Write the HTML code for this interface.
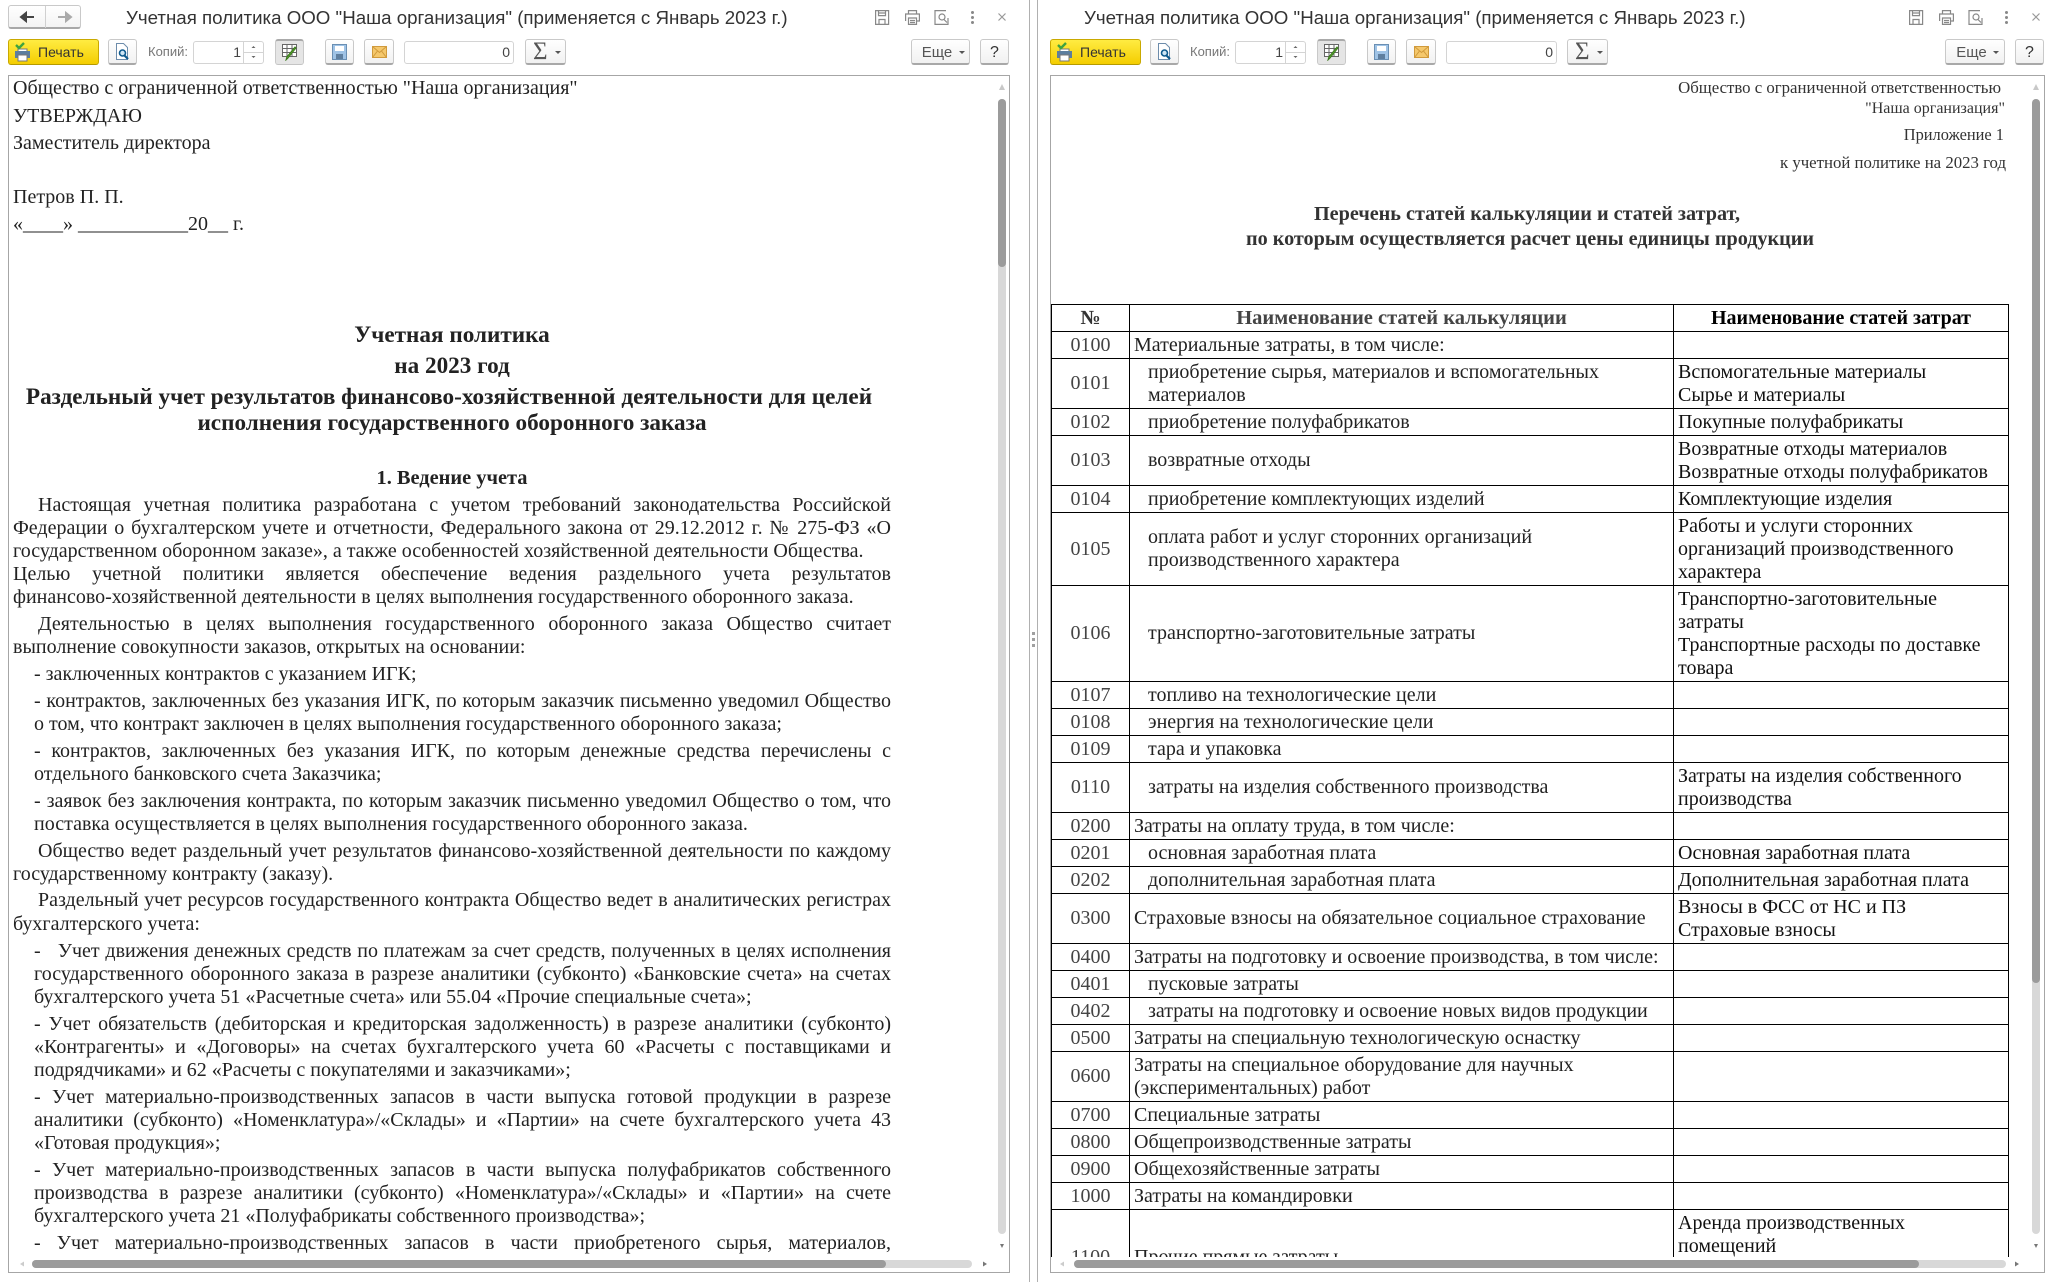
<!DOCTYPE html>
<html lang="ru"><head><meta charset="utf-8"><title>Учетная политика</title>
<style>
html,body{margin:0;padding:0;background:#fff;width:2053px;height:1282px;overflow:hidden}
body{position:relative;font-family:"Liberation Sans",sans-serif;color:#222}
div,span{box-sizing:border-box}
.a{position:absolute}
.t{position:absolute;font-size:18.72px;line-height:24px;white-space:nowrap;color:#333;top:6px}
.btn{position:absolute;top:39px;height:26px;border:1px solid #c9c9c9;border-bottom:2px solid #a8a8a8;border-radius:3px;background:linear-gradient(#fff,#f1f1f1);font-size:14px;color:#444;text-align:center;line-height:25px}
.inp{position:absolute;top:41px;height:23px;border:1px solid #d4d4d4;border-radius:3px;background:#fff;font-size:14px;color:#555;text-align:right;line-height:21px;padding-right:3px}
.frame{position:absolute;top:75px;height:1198px;border:1px solid #a6a6a6;background:#fff}
.tr{position:absolute;background:#d8d8d8;border-radius:4px}
.th{position:absolute;background:#9b9b9b;border-radius:4px}
.doc{font-family:"Liberation Serif",serif;color:#222;font-size:20.2px}
.l{position:absolute;left:13px;width:878px;height:23px;margin-top:1px;line-height:23px;white-space:nowrap;font-family:"Liberation Serif",serif;font-size:20px;color:#222}
.i{left:38px;width:853px}.li{left:34px;width:857px}
.j{white-space:normal;text-align:justify;text-align-last:justify;overflow:hidden}
.c{left:13px;width:878px;text-align:center;font-weight:bold;font-size:20.4px}
.b21{font-size:23.2px;color:#222;height:28px;line-height:23px}
.r{position:absolute;font-family:"Liberation Serif",serif;font-size:16.8px;line-height:20px;margin-top:1px;white-space:nowrap;color:#333;text-align:right;right:48px}
table{border-collapse:collapse;table-layout:fixed;width:957px;position:absolute;left:0;top:0;font-family:"Liberation Serif",serif;font-size:20px;line-height:23px;color:#222}
td{border:1px solid #000;padding:0 0 0 4px;vertical-align:middle;white-space:nowrap;overflow:hidden}
td:first-child{text-align:center;padding:0;color:#444}
td:last-child{color:#111}
td.n{padding-left:18px}
tr.h27{height:27px}tr.h50{height:50px}tr.h73{height:73px}tr.h96{height:96px}
th{border:1px solid #000;font-weight:bold;text-align:center;padding:0;color:#333}
.nav{position:absolute;left:8px;top:5px;width:73px;height:24px;border:1px solid #c9c9c9;border-bottom:2px solid #a8a8a8;border-radius:3px;background:linear-gradient(#fff,#f3f3f3)}
.sig{font-family:"Liberation Serif",serif;text-align:left;padding-left:7px;font-size:25px;line-height:23px;color:#555}
.yel{width:91px;background:linear-gradient(#ffec42,#f4cd00);border:1px solid #c9a900;border-bottom:1px solid #b59a00;color:#333;font-size:14px;text-align:left;padding-left:29px}
</style></head><body>

<!-- LEFT HEADER -->
<div class="nav"><div class="a" style="left:36px;top:0;width:1px;height:22px;background:#d0d0d0"></div>
<svg class="a" style="left:10px;top:4px" width="54" height="14" viewBox="0 0 54 14"><path d="M2 7h13M2 7l5-4v8z" stroke="#444" stroke-width="2" fill="#444"/><path d="M52 7H39M52 7l-5-4v8z" stroke="#aaa" stroke-width="2" fill="#aaa"/></svg></div>
<div class="t" style="left:126px">Учетная политика ООО "Наша организация" (применяется с Январь 2023 г.)</div>
<svg class="a" style="left:875px;top:10px" width="135" height="15" viewBox="0 0 135 15" fill="none" stroke="#888" stroke-width="1.2"><path d="M.6.6h13v13.8H.6zM3.500 .6v5h7v-5M3.500 3h7M4 14v-4.500h6V14"/><path d="M33.500 4V.6h8V4M30.600 11V4h13.800v7h-3M33.500 8h8v6.400h-8zM35 10.500h5M35 12.500h5"/><path d="M65 .6h-5v13.800h13V8M63 .6h8" /><circle cx="67" cy="7" r="3"/><path d="M69 9.500l3 3"/><g fill="#888" stroke="none"><circle cx="97.500" cy="2.500" r="1.500"/><circle cx="97.500" cy="7.500" r="1.500"/><circle cx="97.500" cy="12.500" r="1.500"/></g><path d="M123.500 3.500l7 7m0-7l-7 7" stroke="#999"/></svg>

<div class="btn yel" style="left:8px">Печать</div>
<svg class="a" style="left:13px;top:42px" width="19" height="20" viewBox="0 0 19 20"><path d="M5 7h9v3H5z" fill="#fff" stroke="#777"/><rect x="2" y="9" width="15" height="7" fill="#5c7e9e"/><rect x="5" y="13" width="9" height="6" fill="#fff" stroke="#777"/><path d="M3 3l3 3 5-5" stroke="#3fa33f" stroke-width="2.400" fill="none"/></svg>
<div class="btn" style="left:108px;width:29px"></div>
<svg class="a" style="left:115px;top:43px" width="16" height="18" viewBox="0 0 16 18"><path d="M1.500.5h7l4 4v12h-11z" fill="#fff" stroke="#6d8cab"/><circle cx="7.500" cy="10" r="3" fill="#cfe6f5" stroke="#0e5a8e" stroke-width="1.600"/><path d="M9.500 12.500l3.500 3.500" stroke="#0e5a8e" stroke-width="2.200"/></svg>
<div class="a" style="left:148px;top:43px;font-size:13px;line-height:18px;color:#777">Копий:</div>
<div class="inp" style="left:193px;width:71px;padding-right:22px;color:#444">1</div>
<div class="a" style="left:243px;top:42px;width:1px;height:21px;background:#d4d4d4"></div><div class="a" style="left:243px;top:52px;width:20px;height:1px;background:#d4d4d4"></div>
<svg class="a" style="left:250px;top:44px" width="7" height="16" viewBox="0 0 7 16"><path d="M3.500 2l2 2h-4zM3.500 14l-2-2h4z" fill="#666"/></svg>
<div class="btn" style="left:275px;width:29px;background:#e5e5e5;border-top:2px solid #aaa;border-bottom:1px solid #c4c4c4"></div>
<svg class="a" style="left:282px;top:44px" width="16" height="17" viewBox="0 0 16 17"><path d="M.5.500h14v12H.5zM.5 4.500h14M.5 8.500h14M5 .500v12M10 .500v12" fill="#fff" stroke="#666"/><path d="M14 4l-8 10-2 2 .8-3L13 3z" fill="#5cb030" stroke="#3d7a1f"/></svg>
<div class="btn" style="left:325px;width:29px"></div>
<svg class="a" style="left:332px;top:44px" width="15" height="16" viewBox="0 0 15 16"><path d="M.5.500h14v15H.5z" fill="#9fc3e6" stroke="#6a8fb3"/><rect x="3" y="2" width="9" height="5" fill="#fff"/><rect x="4" y="10" width="7" height="5" fill="#5f7f9f"/></svg>
<div class="btn" style="left:364px;width:30px"></div>
<svg class="a" style="left:372px;top:46px" width="15" height="12" viewBox="0 0 15 12"><path d="M.5.500h14v11H.5z" fill="#f5c86c" stroke="#d09a3c"/><path d="M.5.500l7 6 7-6M.5 11.500l5-6.500M14.500 11.500l-5-6.500" fill="none" stroke="#d09a3c"/></svg>
<div class="inp" style="left:404px;width:110px;color:#444">0</div>
<div class="btn sig" style="left:525px;width:41px">Σ<span class="a" style="left:29px;top:11px;border:3px solid transparent;border-top:3px solid #555;width:0;height:0"></span></div>
<div class="btn" style="left:911px;width:59px;padding-right:7px;color:#555;font-size:15px">Еще<span class="a" style="left:47px;top:11px;border:3px solid transparent;border-top:3px solid #555;width:0;height:0"></span></div>
<div class="btn" style="left:980px;width:29px;font-size:16px;color:#333">?</div>

<!-- Splitter -->
<div class="a" style="left:1029px;top:0;width:1px;height:1282px;background:#b0b0b0"></div>
<div class="a" style="left:1037px;top:0;width:1px;height:1282px;background:#b0b0b0"></div>
<div class="a" style="left:1032px;top:632px;width:3px;height:3px;background:#a0a0a0"></div>
<div class="a" style="left:1032px;top:638px;width:3px;height:3px;background:#a0a0a0"></div>
<div class="a" style="left:1032px;top:644px;width:3px;height:3px;background:#a0a0a0"></div>

<!-- RIGHT HEADER -->
<div class="t" style="left:1084px">Учетная политика ООО "Наша организация" (применяется с Январь 2023 г.)</div>
<svg class="a" style="left:1909px;top:10px" width="135" height="15" viewBox="0 0 135 15" fill="none" stroke="#888" stroke-width="1.2"><path d="M.6.6h13v13.8H.6zM3.500 .6v5h7v-5M3.500 3h7M4 14v-4.500h6V14"/><path d="M33.500 4V.6h8V4M30.600 11V4h13.800v7h-3M33.500 8h8v6.400h-8zM35 10.500h5M35 12.500h5"/><path d="M65 .6h-5v13.800h13V8M63 .6h8" /><circle cx="67" cy="7" r="3"/><path d="M69 9.500l3 3"/><g fill="#888" stroke="none"><circle cx="97.500" cy="2.500" r="1.500"/><circle cx="97.500" cy="7.500" r="1.500"/><circle cx="97.500" cy="12.500" r="1.500"/></g><path d="M123.500 3.500l7 7m0-7l-7 7" stroke="#999"/></svg>

<div class="btn yel" style="left:1050px">Печать</div>
<svg class="a" style="left:1055px;top:42px" width="19" height="20" viewBox="0 0 19 20"><path d="M5 7h9v3H5z" fill="#fff" stroke="#777"/><rect x="2" y="9" width="15" height="7" fill="#5c7e9e"/><rect x="5" y="13" width="9" height="6" fill="#fff" stroke="#777"/><path d="M3 3l3 3 5-5" stroke="#3fa33f" stroke-width="2.400" fill="none"/></svg>
<div class="btn" style="left:1150px;width:29px"></div>
<svg class="a" style="left:1157px;top:43px" width="16" height="18" viewBox="0 0 16 18"><path d="M1.500.5h7l4 4v12h-11z" fill="#fff" stroke="#6d8cab"/><circle cx="7.500" cy="10" r="3" fill="#cfe6f5" stroke="#0e5a8e" stroke-width="1.600"/><path d="M9.500 12.500l3.500 3.500" stroke="#0e5a8e" stroke-width="2.200"/></svg>
<div class="a" style="left:1190px;top:43px;font-size:13px;line-height:18px;color:#777">Копий:</div>
<div class="inp" style="left:1235px;width:71px;padding-right:22px;color:#444">1</div>
<div class="a" style="left:1285px;top:42px;width:1px;height:21px;background:#d4d4d4"></div><div class="a" style="left:1285px;top:52px;width:20px;height:1px;background:#d4d4d4"></div>
<svg class="a" style="left:1292px;top:44px" width="7" height="16" viewBox="0 0 7 16"><path d="M3.500 2l2 2h-4zM3.500 14l-2-2h4z" fill="#666"/></svg>
<div class="btn" style="left:1317px;width:29px;background:#e5e5e5;border-top:2px solid #aaa;border-bottom:1px solid #c4c4c4"></div>
<svg class="a" style="left:1324px;top:44px" width="16" height="17" viewBox="0 0 16 17"><path d="M.5.500h14v12H.5zM.5 4.500h14M.5 8.500h14M5 .500v12M10 .500v12" fill="#fff" stroke="#666"/><path d="M14 4l-8 10-2 2 .8-3L13 3z" fill="#5cb030" stroke="#3d7a1f"/></svg>
<div class="btn" style="left:1367px;width:29px"></div>
<svg class="a" style="left:1374px;top:44px" width="15" height="16" viewBox="0 0 15 16"><path d="M.5.500h14v15H.5z" fill="#9fc3e6" stroke="#6a8fb3"/><rect x="3" y="2" width="9" height="5" fill="#fff"/><rect x="4" y="10" width="7" height="5" fill="#5f7f9f"/></svg>
<div class="btn" style="left:1406px;width:30px"></div>
<svg class="a" style="left:1414px;top:46px" width="15" height="12" viewBox="0 0 15 12"><path d="M.5.500h14v11H.5z" fill="#f5c86c" stroke="#d09a3c"/><path d="M.5.500l7 6 7-6M.5 11.500l5-6.500M14.500 11.500l-5-6.500" fill="none" stroke="#d09a3c"/></svg>
<div class="inp" style="left:1446px;width:111px;color:#444">0</div>
<div class="btn sig" style="left:1567px;width:41px">Σ<span class="a" style="left:29px;top:11px;border:3px solid transparent;border-top:3px solid #555;width:0;height:0"></span></div>
<div class="btn" style="left:1945px;width:60px;padding-right:7px;color:#555;font-size:15px">Еще<span class="a" style="left:47px;top:11px;border:3px solid transparent;border-top:3px solid #555;width:0;height:0"></span></div>
<div class="btn" style="left:2015px;width:29px;font-size:16px;color:#333">?</div>

<!-- LEFT FRAME -->
<div class="frame" style="left:8px;width:1002px"></div>
<div class="l" style="top:76px">Общество с ограниченной ответственностью "Наша организация"</div>
<div class="l" style="top:104px">УТВЕРЖДАЮ</div>
<div class="l" style="top:131px">Заместитель директора</div>
<div class="l" style="top:185px">Петров П. П.</div>
<div class="l" style="top:212px">«____» ___________20__ г.</div>
<div class="l c b21" style="top:323px">Учетная политика</div>
<div class="l c b21" style="top:354px">на 2023 год</div>
<div class="l c b21" style="top:385px;left:10px">Раздельный учет результатов финансово-хозяйственной деятельности для целей</div>
<div class="l c b21" style="top:411px">исполнения государственного оборонного заказа</div>
<div class="l c" style="top:466px">1. Ведение учета</div>
<div class="l i j" style="top:493px">Настоящая учетная политика разработана с учетом требований законодательства Российской</div>
<div class="l j" style="top:516px">Федерации о бухгалтерском учете и отчетности, Федерального закона от 29.12.2012 г. № 275-ФЗ «О</div>
<div class="l" style="top:539px">государственном оборонном заказе», а также особенностей хозяйственной деятельности Общества.</div>
<div class="l j" style="top:562px">Целью учетной политики является обеспечение ведения раздельного учета результатов</div>
<div class="l" style="top:585px">финансово-хозяйственной деятельности в целях выполнения государственного оборонного заказа.</div>
<div class="l i j" style="top:612px">Деятельностью в целях выполнения государственного оборонного заказа Общество считает</div>
<div class="l" style="top:635px">выполнение совокупности заказов, открытых на основании:</div>
<div class="l li" style="top:662px">- заключенных контрактов с указанием ИГК;</div>
<div class="l li j" style="top:689px">- контрактов, заключенных без указания ИГК, по которым заказчик письменно уведомил Общество</div>
<div class="l li" style="top:712px">о том, что контракт заключен в целях выполнения государственного оборонного заказа;</div>
<div class="l li j" style="top:739px">- контрактов, заключенных без указания ИГК, по которым денежные средства перечислены с</div>
<div class="l li" style="top:762px">отдельного банковского счета Заказчика;</div>
<div class="l li j" style="top:789px">- заявок без заключения контракта, по которым заказчик письменно уведомил Общество о том, что</div>
<div class="l li" style="top:812px">поставка осуществляется в целях выполнения государственного оборонного заказа.</div>
<div class="l i j" style="top:839px">Общество ведет раздельный учет результатов финансово-хозяйственной деятельности по каждому</div>
<div class="l" style="top:862px">государственному контракту (заказу).</div>
<div class="l i j" style="top:888px">Раздельный учет ресурсов государственного контракта Общество ведет в аналитических регистрах</div>
<div class="l" style="top:912px">бухгалтерского учета:</div>
<div class="l li j" style="top:939px">-&nbsp;&nbsp; Учет движения денежных средств по платежам за счет средств, полученных в целях исполнения</div>
<div class="l li j" style="top:962px">государственного оборонного заказа в разрезе аналитики (субконто) «Банковские счета» на счетах</div>
<div class="l li" style="top:985px">бухгалтерского учета 51 «Расчетные счета» или 55.04 «Прочие специальные счета»;</div>
<div class="l li j" style="top:1012px">- Учет обязательств (дебиторская и кредиторская задолженность) в разрезе аналитики (субконто)</div>
<div class="l li j" style="top:1035px">«Контрагенты» и «Договоры» на счетах бухгалтерского учета 60 «Расчеты с поставщиками и</div>
<div class="l li" style="top:1058px">подрядчиками» и 62 «Расчеты с покупателями и заказчиками»;</div>
<div class="l li j" style="top:1085px">- Учет материально-производственных запасов в части выпуска готовой продукции в разрезе</div>
<div class="l li j" style="top:1108px">аналитики (субконто) «Номенклатура»/«Склады» и «Партии» на счете бухгалтерского учета 43</div>
<div class="l li" style="top:1131px">«Готовая продукция»;</div>
<div class="l li j" style="top:1158px">- Учет материально-производственных запасов в части выпуска полуфабрикатов собственного</div>
<div class="l li j" style="top:1181px">производства в разрезе аналитики (субконто) «Номенклатура»/«Склады» и «Партии» на счете</div>
<div class="l li" style="top:1204px">бухгалтерского учета 21 «Полуфабрикаты собственного производства»;</div>
<div class="l li j" style="top:1231px">- Учет материально-производственных запасов в части приобретеного сырья, материалов,</div>

<!-- Left scrollbars -->
<div class="tr" style="left:998px;top:99px;width:8px;height:1135px"></div>
<div class="th" style="left:998px;top:99px;width:8px;height:168px"></div>
<svg class="a" style="left:998px;top:83px" width="8" height="8" viewBox="0 0 8 8"><path d="M4 1l3 6H1z" fill="#c8c8c8"/></svg>
<svg class="a" style="left:999px;top:1243px" width="6" height="6" viewBox="0 0 6 6"><path d="M3 5L1 1h4z" fill="#777"/></svg>
<div class="tr" style="left:32px;top:1260px;width:940px;height:8px"></div>
<div class="th" style="left:32px;top:1260px;width:854px;height:8px"></div>
<svg class="a" style="left:19px;top:1261px" width="6" height="6" viewBox="0 0 6 6"><path d="M1 3l4-2.500v5z" fill="#ccc"/></svg>
<svg class="a" style="left:982px;top:1261px" width="6" height="6" viewBox="0 0 6 6"><path d="M5 3L1 .5v5z" fill="#777"/></svg>

<!-- RIGHT FRAME -->
<div class="frame" style="left:1050px;width:995px"></div>
<div class="r" style="top:77px;right:52px">Общество с ограниченной ответственностью</div>
<div class="r" style="top:98px;font-size:16px">"Наша организация"</div>
<div class="r" style="top:124px;right:49px;font-size:16.4px">Приложение 1</div>
<div class="r" style="top:152px;right:47px">к учетной политике на 2023 год</div>
<div class="a doc" style="left:1051px;width:958px;top:203px;text-align:center;font-weight:bold;line-height:24px;color:#333"><span style="position:relative;left:-3px;top:-1px">Перечень статей калькуляции и статей затрат,</span><br>по которым осуществляется расчет цены единицы продукции</div>

<div class="a" style="left:1051px;top:304px;width:958px;height:953px;overflow:hidden">
<table>
<colgroup><col style="width:78px"><col style="width:544px"><col style="width:335px"></colgroup>
<tr class="h27"><th>№</th><th style="color:#444;font-size:20.5px">Наименование статей калькуляции</th><th style="color:#000">Наименование статей затрат</th></tr>
<tr class="h27"><td>0100</td><td>Материальные затраты, в том числе:</td><td></td></tr>
<tr class="h50"><td>0101</td><td class="n">приобретение сырья, материалов и вспомогательных<br>материалов</td><td>Вспомогательные материалы<br>Сырье и материалы</td></tr>
<tr class="h27"><td>0102</td><td class="n">приобретение полуфабрикатов</td><td>Покупные полуфабрикаты</td></tr>
<tr class="h50"><td>0103</td><td class="n">возвратные отходы</td><td>Возвратные отходы материалов<br>Возвратные отходы полуфабрикатов</td></tr>
<tr class="h27"><td>0104</td><td class="n">приобретение комплектующих изделий</td><td>Комплектующие изделия</td></tr>
<tr class="h73"><td>0105</td><td class="n">оплата работ и услуг сторонних организаций<br>производственного характера</td><td>Работы и услуги сторонних<br>организаций производственного<br>характера</td></tr>
<tr class="h96"><td>0106</td><td class="n">транспортно-заготовительные затраты</td><td>Транспортно-заготовительные<br>затраты<br>Транспортные расходы по доставке<br>товара</td></tr>
<tr class="h27"><td>0107</td><td class="n">топливо на технологические цели</td><td></td></tr>
<tr class="h27"><td>0108</td><td class="n">энергия на технологические цели</td><td></td></tr>
<tr class="h27"><td>0109</td><td class="n">тара и упаковка</td><td></td></tr>
<tr class="h50"><td>0110</td><td class="n">затраты на изделия собственного производства</td><td>Затраты на изделия собственного<br>производства</td></tr>
<tr class="h27"><td>0200</td><td>Затраты на оплату труда, в том числе:</td><td></td></tr>
<tr class="h27"><td>0201</td><td class="n">основная заработная плата</td><td>Основная заработная плата</td></tr>
<tr class="h27"><td>0202</td><td class="n">дополнительная заработная плата</td><td>Дополнительная заработная плата</td></tr>
<tr class="h50"><td>0300</td><td>Страховые взносы на обязательное социальное страхование</td><td>Взносы в ФСС от НС и ПЗ<br>Страховые взносы</td></tr>
<tr class="h27"><td>0400</td><td>Затраты на подготовку и освоение производства, в том числе:</td><td></td></tr>
<tr class="h27"><td>0401</td><td class="n">пусковые затраты</td><td></td></tr>
<tr class="h27"><td>0402</td><td class="n">затраты на подготовку и освоение новых видов продукции</td><td></td></tr>
<tr class="h27"><td>0500</td><td>Затраты на специальную технологическую оснастку</td><td></td></tr>
<tr class="h50"><td>0600</td><td>Затраты на специальное оборудование для научных<br>(экспериментальных) работ</td><td></td></tr>
<tr class="h27"><td>0700</td><td>Специальные затраты</td><td></td></tr>
<tr class="h27"><td>0800</td><td>Общепроизводственные затраты</td><td></td></tr>
<tr class="h27"><td>0900</td><td>Общехозяйственные затраты</td><td></td></tr>
<tr class="h27"><td>1000</td><td>Затраты на командировки</td><td></td></tr>
<tr class="h96"><td>1100</td><td>Прочие прямые затраты</td><td>Аренда производственных<br>помещений<br>Прочие расходы<br>Прочие затраты</td></tr>
</table></div>

<!-- Right scrollbars -->
<div class="tr" style="left:2032px;top:99px;width:8px;height:1135px"></div>
<div class="th" style="left:2032px;top:99px;width:8px;height:884px"></div>
<svg class="a" style="left:2032px;top:83px" width="8" height="8" viewBox="0 0 8 8"><path d="M4 1l3 6H1z" fill="#c8c8c8"/></svg>
<svg class="a" style="left:2033px;top:1243px" width="6" height="6" viewBox="0 0 6 6"><path d="M3 5L1 1h4z" fill="#777"/></svg>
<div class="tr" style="left:1074px;top:1260px;width:932px;height:8px"></div>
<div class="th" style="left:1074px;top:1260px;width:845px;height:8px"></div>
<svg class="a" style="left:1059px;top:1261px" width="6" height="6" viewBox="0 0 6 6"><path d="M1 3l4-2.500v5z" fill="#ccc"/></svg>
<svg class="a" style="left:2014px;top:1261px" width="6" height="6" viewBox="0 0 6 6"><path d="M5 3L1 .5v5z" fill="#777"/></svg>
</body></html>
